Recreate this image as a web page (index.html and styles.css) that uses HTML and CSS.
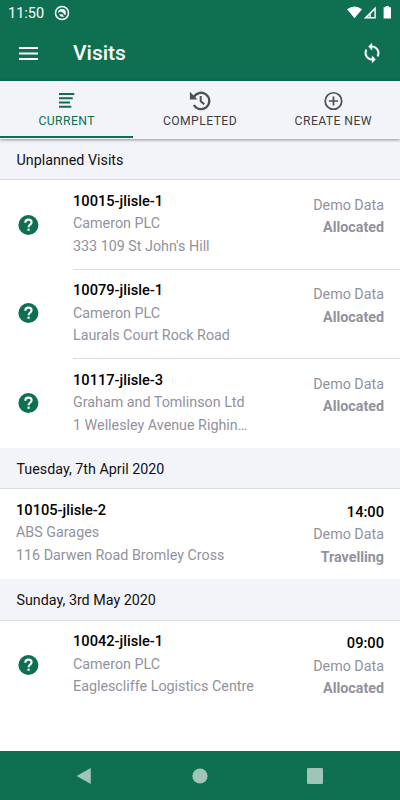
FILE: index.html
```
<!DOCTYPE html>
<html lang="en">
<head>
<meta charset="utf-8">
<title>Visits</title>
<link rel="stylesheet" href="styles.css">
</head>
<body>
<svg width="0" height="0" class="defs"><defs>
<symbol id="help" viewBox="0 0 24 24"><circle cx="12.4" cy="12" r="10" fill="#0e6f51"/><path d="M9.3 9.7c0-1.9 1.3-3.1 3.2-3.1 1.8 0 3.1 1.1 3.1 2.7 0 2.5-3 2.4-3 4.9" fill="none" stroke="#fff" stroke-width="2.1"/><path d="M11.5 15.6h2.2v2.2h-2.2z" fill="#fff"/></symbol>
</defs></svg>
<header>
  <div class="status">
    <span class="clock">11:50</span>
    <svg class="badge" viewBox="0 0 16 16"><circle cx="8" cy="8" r="6.5" fill="none" stroke="#fff" stroke-width="1.5"/><path d="M4.1 8A3.9 3.9 0 0 1 11.9 8q0 1.2-.7 2.2L8.6 7.4 6.6 6.6z" fill="#fff"/><path d="M5 9.2L8.4 9.2 10 11.5A4 4 0 0 1 5 9.2z" fill="#fff"/></svg>
    <svg class="signals" viewBox="0 0 46 14"><path d="M0 3.3Q7.5-2.5 15 3.3L7.5 12.2z" fill="#fff"/><path d="M28.8 .4v12H16.8zM27.4 4.2L23.8 7.8V11h3.6z" fill="#fff" fill-rule="evenodd"/><path d="M22.6 8.6v2.6H20z" fill="#0e6f51" opacity=".5"/><path d="M36.6 1.3h2V0h3.2v1.3h2.2v11.2h-7.4z" fill="#fff"/></svg>
  </div>
  <div class="toolbar">
    <svg class="menu" viewBox="0 0 19 13"><path d="M0 1h19M0 6.5h19M0 12h19" stroke="#fff" stroke-width="2"/></svg>
    <h1>Visits</h1>
    <svg class="sync" viewBox="0 0 24 24"><path fill="#fff" stroke="#fff" stroke-width=".3" d="M12 4V1L8 5l4 4V6c3.31 0 6 2.69 6 6 0 1.01-.25 1.97-.7 2.8l1.46 1.46C19.54 15.03 20 13.57 20 12c0-4.42-3.58-8-8-8zm0 14c-3.31 0-6-2.69-6-6 0-1.01.25-1.97.7-2.8L5.24 7.74C4.46 8.97 4 10.43 4 12c0 4.42 3.58 8 8 8v3l4-4-4-4v3z"/></svg>
  </div>
</header>
<nav class="tabs">
  <div class="tab active"><svg viewBox="0 0 22 22"><path d="M3 3.9h15.3M3 8.2h13.7M3 12.6h11M3 16.8h12.3" stroke="currentColor" stroke-width="2"/></svg><span>CURRENT</span></div>
  <div class="tab"><svg viewBox="0 0 22 22"><path d="M4.6 7.6A8.2 8.2 0 1 1 4.9 15" fill="none" stroke="currentColor" stroke-width="2.3"/><path d="M.9 1.8v7.6h7.6z" fill="currentColor"/><path d="M11.7 6v5.2l3.6 3" fill="none" stroke="currentColor" stroke-width="2"/></svg><span>COMPLETED</span></div>
  <div class="tab"><svg viewBox="0 0 24 24"><circle cx="12.5" cy="12" r="9" fill="none" stroke="currentColor" stroke-width="1.9"/><path d="M12.5 7v10M7.5 12h10" stroke="currentColor" stroke-width="1.9"/></svg><span>CREATE NEW</span></div>
</nav>
<main>
  <h2 class="first">Unplanned Visits</h2>
  <article class="top"><svg class="help"><use href="#help"/></svg><div class="body"><div class="info"><b>10015-jlisle-1</b><p>Cameron PLC</p><p>333 109 St John's Hill</p></div><div class="side"><p>Demo Data</p><strong>Allocated</strong></div></div></article>
  <article><svg class="help"><use href="#help"/></svg><div class="body line"><div class="info"><b>10079-jlisle-1</b><p>Cameron PLC</p><p>Laurals Court Rock Road</p></div><div class="side"><p>Demo Data</p><strong>Allocated</strong></div></div></article>
  <article><svg class="help"><use href="#help"/></svg><div class="body line"><div class="info"><b>10117-jlisle-3</b><p>Graham and Tomlinson Ltd</p><p>1 Wellesley Avenue Righin…</p></div><div class="side"><p>Demo Data</p><strong>Allocated</strong></div></div></article>
  <h2>Tuesday, 7th April 2020</h2>
  <article class="timed plain"><div class="body"><div class="info"><b>10105-jlisle-2</b><p>ABS Garages</p><p>116 Darwen Road Bromley Cross</p></div><div class="side"><b>14:00</b><p>Demo Data</p><strong>Travelling</strong></div></div></article>
  <h2>Sunday, 3rd May 2020</h2>
  <article class="timed"><svg class="help"><use href="#help"/></svg><div class="body"><div class="info"><b>10042-jlisle-1</b><p>Cameron PLC</p><p>Eaglescliffe Logistics Centre</p></div><div class="side"><b>09:00</b><p>Demo Data</p><strong>Allocated</strong></div></div></article>
</main>
<footer>
  <svg viewBox="0 0 18 18"><path d="M1.5 9L15.8 1v16z"/></svg>
  <svg viewBox="0 0 18 18"><circle cx="9" cy="9" r="7.6"/></svg>
  <svg viewBox="0 0 18 18"><rect x="1" y="1" width="16" height="16" rx="1"/></svg>
</footer>
</body>
</html>
```
FILE: styles.css
```
* { box-sizing: border-box; margin: 0; }
body { width: 400px; height: 800px; overflow: hidden; display: flex; flex-direction: column; background: #fff; font-family: Roboto, sans-serif; font-size: 14.3px; color: #111; }
.defs { position: absolute; }
header { height: 81px; flex: none; background: #0e6f51; color: #fff; }
.status { height: 25px; display: flex; align-items: center; padding: 0 7px 0 8px; }
.clock { font-size: 14.5px; width: 46px; padding-top: 1px; }
.badge { width: 16px; height: 16px; }
.signals { width: 46px; height: 14px; margin-left: auto; }
.toolbar { height: 56px; display: flex; align-items: center; padding: 0 17px 0 19px; }
.menu { width: 19px; height: 13px; margin-right: 35px; }
h1 { font-size: 21px; font-weight: 500; line-height: 24px; }
.sync { width: 22px; height: 22px; margin-left: auto; }
.tabs { height: 58px; flex: none; display: grid; grid-template-columns: repeat(3, 1fr); background: #f3f4f9; color: #4f4f50; box-shadow: 0 1px 3px rgba(0,0,0,.4); z-index: 1; }
.tab { display: flex; flex-direction: column; align-items: center; padding-top: 9px; font-size: 12.2px; line-height: 16px; letter-spacing: .42px; white-space: nowrap; }
.tab svg { width: 22px; height: 22px; margin-bottom: 1px; }
.tab span { color: #3e3e3f; }
.tab.active { color: #0e6f51; border-bottom: 2px solid #0e6f51; height: 57px; }
.tab.active span { color: #0e6f51; }
h2 { height: 41.5px; padding-left: 16.5px; font-size: 14.3px; font-weight: 400; line-height: 43px; background: #f3f4f9; border-bottom: 1px solid #dcdde1; }
h2.first { height: 41px; line-height: 43px; }
article { height: 89.5px; display: flex; }
article.top { height: 88.5px; }
.timed { height: 90px; }
.help { width: 24px; height: 24px; margin: 32.5px 33px 0 16px; flex: none; }
.body { flex: 1; display: flex; justify-content: space-between; padding: 8.5px 16px 0 0; border-top: 1px solid transparent; }
.line { border-top-color: #dedee0; padding-top: 9.5px; }
.plain .body { padding-left: 16px; }
.info, .side { line-height: 22.5px; white-space: nowrap; }
.info b, .side b { display: block; font-size: 14.65px; font-weight: 500; color: #000; }
.info p, .side p { color: #92929d; }
.side { text-align: right; padding-top: 4px; }
.timed .side { padding-top: 2px; }
.side strong { display: block; font-weight: 700; color: #92929d; }
footer { height: 49px; flex: none; margin-top: auto; display: flex; justify-content: space-between; align-items: center; padding: 0 76px 0 75px; background: #0e6f51; fill: #9fc5b9; }
footer svg { width: 18px; height: 18px; }
```
